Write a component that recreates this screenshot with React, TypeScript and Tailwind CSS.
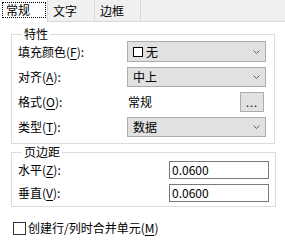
import React from 'react'

const font = { fontFamily: '"Noto Sans CJK SC", "Noto Sans", sans-serif' }

function Chevron() {
  return (
    <svg width="7" height="4" viewBox="0 0 7 4" className="shrink-0">
      <polyline points="0.5,0.5 3.5,3.5 6.5,0.5" fill="none" stroke="#606060" strokeWidth="1" />
    </svg>
  )
}

function Label({ text, accel }: { text: string; accel: string }) {
  return (
    <span className="text-black">
      {text}(<span className="underline underline-offset-2">{accel}</span>):
    </span>
  )
}

function Select({ children, h = 'h-[20px]' }: { children: React.ReactNode; h?: string }) {
  return (
    <div className={`flex w-[139px] ${h} items-center justify-between border border-[#adadad] bg-[#e1e1e1] pl-[5px] pr-[5px] text-black`}>
      <span className="flex items-center">{children}</span>
      <Chevron />
    </div>
  )
}

export default function App() {
  return (
    <div className="h-[242px] w-[285px] overflow-hidden bg-white text-[12px] leading-[14px]" style={font}>
      {/* tabs */}
      <div className="flex h-[22px] bg-[#f0f0f0]">
        <div className="flex w-[48px] items-start border-r border-[#d9d9d9] bg-white pl-[2px] pt-[2px]">
          <span className="flex h-[16px] w-[44px] items-center border border-dotted border-black pl-[3px] text-black">
            常规
          </span>
        </div>
        <div className="flex w-[47px] items-center border-r border-b border-[#d9d9d9] pl-[5px] text-black">
          文字
        </div>
        <div className="flex w-[46px] items-center border-r border-b border-[#d9d9d9] pl-[5px] text-black">
          边框
        </div>
        <div className="flex-1 border-b border-[#d9d9d9]" />
      </div>

      {/* 特性 */}
      <fieldset className="ml-[11px] mt-[5px] w-[264px] border border-[#dcdcdc] pb-[6px] pl-[6px]">
        <legend className="ml-[4px] px-[2px] text-black">特性</legend>
        <div className="flex flex-col gap-[5px]">
          <div className="flex items-center">
            <div className="w-[109px]"><Label text="填充颜色" accel="F" /></div>
            <Select h="h-[21px]">
              <span className="mr-[3px] inline-block h-[10px] w-[10px] border border-black bg-white" />
              无
            </Select>
          </div>
          <div className="flex items-center">
            <div className="w-[109px]"><Label text="对齐" accel="A" /></div>
            <Select>中上</Select>
          </div>
          <div className="flex items-center">
            <div className="w-[109px]"><Label text="格式" accel="O" /></div>
            <div className="flex w-[139px] items-center justify-between pl-[1px] pr-[2px]">
              <span className="text-black">常规</span>
              <div className="flex h-[20px] w-[24px] items-center justify-center border border-[#adadad] bg-[#e1e1e1] text-[11px] leading-none tracking-[1px] text-black">
                ...
              </div>
            </div>
          </div>
          <div className="flex items-center">
            <div className="w-[109px]"><Label text="类型" accel="T" /></div>
            <Select>数据</Select>
          </div>
        </div>
      </fieldset>

      {/* 页边距 */}
      <fieldset className="ml-[11px] mt-[1px] w-[265px] border border-[#dcdcdc] pb-[4px] pl-[6px] pt-[2px]">
        <legend className="ml-[4px] px-[2px] text-black">页边距</legend>
        <div className="flex flex-col gap-[5px]">
          <div className="flex items-center">
            <div className="w-[151px]"><Label text="水平" accel="Z" /></div>
            <div className="flex h-[18px] w-[100px] items-center border border-[#7a7a7a] bg-white pl-[2px] text-black">
              0.0600
            </div>
          </div>
          <div className="flex items-center">
            <div className="w-[151px]"><Label text="垂直" accel="V" /></div>
            <div className="flex h-[18px] w-[100px] items-center border border-[#7a7a7a] bg-white pl-[2px] text-black">
              0.0600
            </div>
          </div>
        </div>
      </fieldset>

      {/* checkbox */}
      <div className="ml-[13px] mt-[14px] flex items-center">
        <span className="mr-[2px] inline-block h-[13px] w-[13px] border border-[#333333] bg-white" />
        <span className="text-black">
          创建行/列时合并单元(<span className="underline underline-offset-2">M</span>)
        </span>
      </div>
    </div>
  )
}
